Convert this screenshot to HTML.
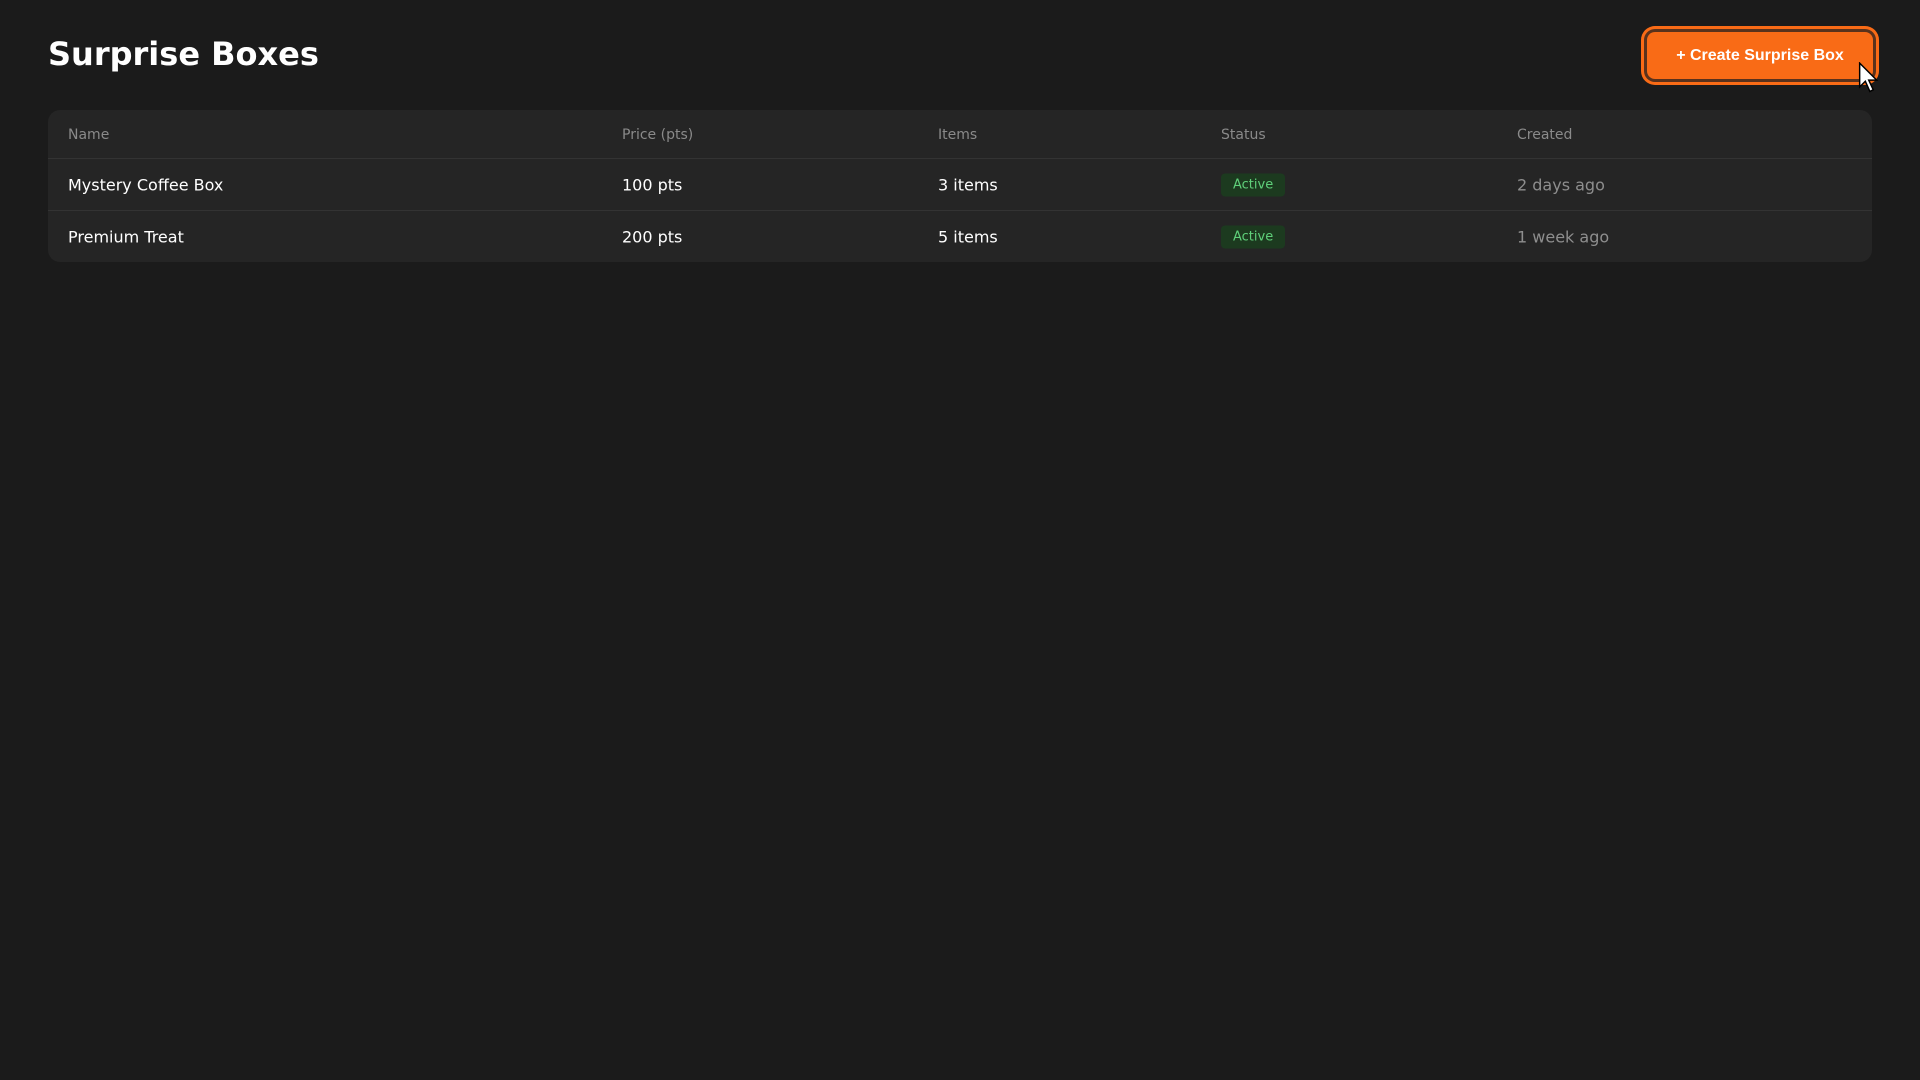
<!DOCTYPE html>
<html><head><meta charset="utf-8"><style>
*{box-sizing:border-box;margin:0;padding:0}
body{width:1920px;height:1080px;background:#1b1b1b;font-family:"DejaVu Sans","Liberation Sans",sans-serif;color:#fff;position:relative;overflow:hidden}
h1{position:absolute;left:48px;top:35px;font-size:32px;font-weight:bold;color:#fff}
.btn{position:absolute;left:1647px;top:32px;width:226px;height:47px;background:#f96b16;border-radius:8px;font-family:"Liberation Sans",sans-serif;font-weight:bold;font-size:16px;color:#fff;display:flex;align-items:center;justify-content:center;box-shadow:0 0 0 3px #5a321c,0 0 0 6px #f96b16}
.tbl{position:absolute;left:48px;top:110px;width:1824px;height:152px;background:#252525;border-radius:12px;overflow:hidden}
.row{position:absolute;left:0;width:100%;border-bottom:1px solid #333}
.row span{position:absolute;top:50%;transform:translateY(-50%);white-space:nowrap}
.h span{font-size:14px;color:#8a8a8a;margin-top:1px}
.r span{font-size:16px;color:#fff}
.r span.g{color:#8e8e8e}
.badge{background:#1c3a1f;color:#5fd07a!important;font-size:13px!important;padding:4px 12px;border-radius:4px}
.c1{left:20px}.c2{left:574px}.c3{left:890px}.c4{left:1173px}.c5{left:1469px}
</style></head><body>
<h1>Surprise Boxes</h1>
<div class="btn">+ Create Surprise Box</div>
<svg style="position:absolute;left:1858px;top:62px" width="26" height="34" viewBox="0 0 22 30"><path d="M1 1 L1 22 L6 17 L10 26 L13 24.5 L9 16 L16 16 Z" fill="#fff" stroke="#000" stroke-width="1.3"/></svg>
<div class="tbl">
<div class="row h" style="top:0;height:49px"><span class="c1">Name</span><span class="c2">Price (pts)</span><span class="c3">Items</span><span class="c4">Status</span><span class="c5">Created</span></div>
<div class="row r" style="top:49px;height:52px"><span class="c1">Mystery Coffee Box</span><span class="c2">100 pts</span><span class="c3">3 items</span><span class="c4 badge">Active</span><span class="c5 g">2 days ago</span></div>
<div class="row r" style="top:101px;height:51px;border:none"><span class="c1">Premium Treat</span><span class="c2">200 pts</span><span class="c3">5 items</span><span class="c4 badge">Active</span><span class="c5 g">1 week ago</span></div>
</div>
</body></html>
